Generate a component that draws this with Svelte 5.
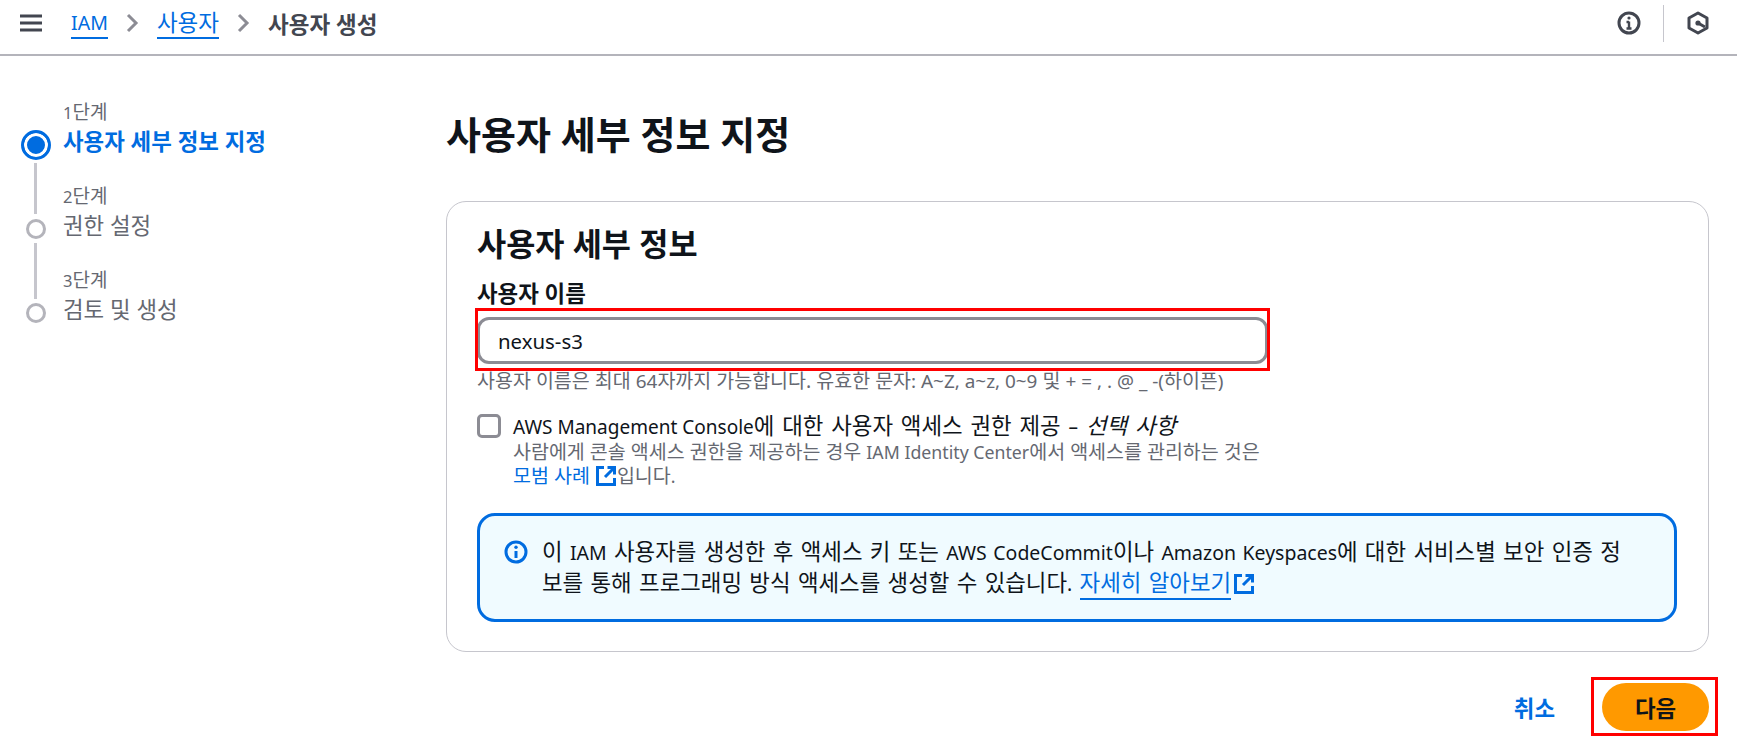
<script>
  let steps = [
    { no: '단계', n: 1, title: '사용자 세부 정보 지정', active: true },
    { no: '단계', n: 2, title: '권한 설정', active: false },
    { no: '단계', n: 3, title: '검토 및 생성', active: false }
  ];
</script>

{#snippet external()}
  <svg class="ext" width="22" height="22" viewBox="0 0 22 22" fill="none" aria-hidden="true">
    <path d="M9 2.5H2.5v17h17V13" stroke="currentColor" stroke-width="3"/>
    <path d="M12.5 2.5h7v7M19 3l-9 9" stroke="currentColor" stroke-width="3"/>
  </svg>
{/snippet}

<div class="page">
  <header>
    <svg class="burger" width="22" height="18" viewBox="0 0 22 18" aria-hidden="true">
      <path d="M0 2h22M0 9h22M0 16h22" stroke="#424650" stroke-width="3"/>
    </svg>
    <nav class="crumbs">
      <a href="#iam"><span class="en">IAM</span></a>
      <svg width="13" height="20" viewBox="0 0 13 20" fill="none" aria-hidden="true"><path d="M2 2l8 8-8 8" stroke="#8c8c94" stroke-width="3"/></svg>
      <a href="#users">사용자</a>
      <svg width="13" height="20" viewBox="0 0 13 20" fill="none" aria-hidden="true"><path d="M2 2l8 8-8 8" stroke="#8c8c94" stroke-width="3"/></svg>
      <span>사용자 생성</span>
    </nav>
    <div class="tools">
      <svg width="24" height="24" viewBox="0 0 24 24" fill="none" aria-hidden="true">
        <circle cx="12" cy="12" r="10" stroke="#424650" stroke-width="3"/>
        <path d="M12 10.5V18M9.5 17.5h5M9.5 11h2.5" stroke="#424650" stroke-width="2.4"/>
        <circle cx="12" cy="7" r="1.6" fill="#424650"/>
      </svg>
      <i class="sep"></i>
      <svg width="24" height="24" viewBox="0 0 24 24" fill="none" aria-hidden="true">
        <path d="M12 2l9 5v10l-9 5-9-5V7z" stroke="#424650" stroke-width="3" stroke-linejoin="round"/>
        <circle cx="12" cy="12" r="2.6" fill="#424650"/>
        <path d="M12 12l7 4" stroke="#424650" stroke-width="3"/>
      </svg>
    </div>
  </header>

  <div class="body">
    <ol class="steps">
      {#each steps as s, i}
        <li class:active={s.active}>
          <small><span class="en">{s.n}</span>{s.no}</small>
          <div class="row">
            <b class="dot"></b>
            <span>{s.title}</span>
          </div>
          {#if i < steps.length - 1}<i class="line"></i>{/if}
        </li>
      {/each}
    </ol>

    <main>
      <h1>사용자 세부 정보 지정</h1>
      <section class="card">
        <h2>사용자 세부 정보</h2>
        <label for="user">사용자 이름</label>
        <div class="input-wrap">
          <input id="user" value="nexus-s3" />
        </div>
        <p class="hint">사용자 이름은 최대 <span class="en">64</span>자까지 가능합니다. 유효한 문자<span class="en">: A~Z, a~z, 0~9</span> 및 <span class="en">+ = , . @ _ -(</span>하이픈<span class="en">)</span></p>

        <div class="check">
          <span class="box"></span>
          <div>
            <p class="check-title"><span class="en">AWS Management Console</span>에 대한 사용자 액세스 권한 제공 <span class="en">–</span> <em>선택 사항</em></p>
            <p class="check-desc">사람에게 콘솔 액세스 권한을 제공하는 경우 <span class="en">IAM Identity Center</span>에서 액세스를 관리하는 것은<br /><a href="#best">모범 사례 {@render external()}</a>입니다<span class="en">.</span></p>
          </div>
        </div>

        <div class="info">
          <svg class="info-icon" width="24" height="24" viewBox="0 0 24 24" fill="none" aria-hidden="true">
            <circle cx="12" cy="12" r="10" stroke="#006ce0" stroke-width="3"/>
            <path d="M12 11v7" stroke="#006ce0" stroke-width="3"/>
            <circle cx="12" cy="7.2" r="1.7" fill="#006ce0"/>
          </svg>
          <p>이 <span class="en">IAM</span> 사용자를 생성한 후 액세스 키 또는 <span class="en">AWS CodeCommit</span>이나 <span class="en">Amazon Keyspaces</span>에 대한 서비스별 보안 인증 정보를 통해 프로그래밍 방식 액세스를 생성할 수 있습니다<span class="en">.</span> <a href="#more">자세히 알아보기 </a><span class="ext-wrap">{@render external()}</span></p>
        </div>
      </section>

      <div class="actions">
        <a class="cancel" href="#cancel">취소</a>
        <button>다음</button>
      </div>
    </main>
  </div>
</div>

<style>
  :global(body) {
    margin: 0;
    background: #fff;
  }

  .page {
    width: 1737px;
    height: 747px;
    overflow: hidden;
    font-family: "Noto Sans", "Noto Sans CJK KR", sans-serif;
    color: #0f141a;
  }

  /* latin text sits smaller than the hangul around it */
  .en {
    font-size: 0.87em;
  }

  header {
    height: 56px;
    box-sizing: border-box;
    border-bottom: 2px solid #b4b4bb;
    display: flex;
    align-items: center;
    padding: 0 27px 8px 20px;
  }

  .crumbs {
    display: flex;
    align-items: center;
    gap: 18px;
    margin-left: 29px;
    font-size: 22.5px;
    color: #424650;
    font-weight: 700;
  }

  .crumbs a {
    color: #006ce0;
    font-weight: 400;
    text-decoration: none;
    border-bottom: 2px solid #006ce0;
    line-height: 29px;
  }

  .tools {
    margin-left: auto;
    display: flex;
    align-items: center;
    gap: 22px;
  }

  .sep {
    width: 1px;
    height: 37px;
    background: #c6c6cd;
  }

  .body {
    display: flex;
  }

  .steps {
    list-style: none;
    margin: 0;
    padding: 44px 0 0 20px;
    width: 446px;
    flex: none;
    box-sizing: border-box;
  }

  .steps li {
    position: relative;
    height: 84px;
    padding-left: 43px;
    color: #656871;
    font-size: 22.4px;
  }

  .steps small {
    display: block;
    font-size: 19px;
    line-height: 24px;
    color: #656871;
  }

  .row {
    display: flex;
    line-height: 30px;
    margin-top: 2px;
  }

  .active .row {
    color: #006ce0;
    font-weight: 700;
  }

  .dot {
    position: absolute;
    left: 6px;
    top: 35px;
    width: 20px;
    height: 20px;
    box-sizing: border-box;
    border: 3px solid #b4b4bb;
    border-radius: 50%;
    background: #fff;
  }

  .active .dot {
    left: 1px;
    top: 30px;
    width: 30px;
    height: 30px;
    border-color: #006ce0;
    background: #006ce0;
    box-shadow: inset 0 0 0 3px #fff;
  }

  .line {
    position: absolute;
    left: 14px;
    top: 63px;
    width: 3px;
    height: 51px;
    background: #c6c6cd;
  }

  li:not(.active) .line {
    top: 59px;
    height: 56px;
  }

  main {
    width: 1263px;
    flex: none;
  }

  h1 {
    margin: 0;
    font-size: 38px;
    line-height: 44px;
    font-weight: 700;
    padding-top: 56px;
  }

  .card {
    margin-top: 45px;
    height: 451px;
    box-sizing: border-box;
    border: 1px solid #c6c6cd;
    border-radius: 20px;
    padding: 24px 29px 0 30px;
  }

  h2 {
    margin: 0;
    font-size: 31.7px;
    line-height: 36px;
    font-weight: 700;
  }

  label {
    display: block;
    margin-top: 17px;
    font-size: 22.4px;
    line-height: 30px;
    font-weight: 700;
  }

  .input-wrap {
    position: relative;
    width: 791px;
    margin-top: 8px;
  }

  /* red annotation around the input */
  .input-wrap::after {
    content: '';
    position: absolute;
    inset: -9px -2px -7px -2px;
    border: 3px solid #f00;
    pointer-events: none;
  }

  input {
    display: block;
    width: 100%;
    height: 47px;
    box-sizing: border-box;
    border: 3px solid #8c8c94;
    border-radius: 12px;
    padding: 0 18px;
    font: inherit;
    font-size: 20.4px;
    color: #0f141a;
    outline: none;
  }

  .hint {
    margin: 5px 0 0;
    font-size: 19.5px;
    line-height: 24px;
    color: #656871;
  }

  .hint .en {
    font-size: 0.97em;
  }

  .check-desc .en {
    font-size: 0.91em;
  }

  .check {
    display: flex;
    gap: 12px;
    margin-top: 20px;
  }

  .box {
    flex: none;
    width: 24px;
    height: 24px;
    box-sizing: border-box;
    border: 3px solid #8c8c94;
    border-radius: 5px;
    margin-top: 1px;
  }

  .check p {
    margin: 0;
  }

  .check-title {
    font-size: 22.4px;
    line-height: 25px;
    word-spacing: 2px;
  }

  .check-title .en {
    font-size: 0.85em;
    word-spacing: 0;
  }

  .check-desc {
    font-size: 19.5px;
    line-height: 24px;
    color: #656871;
  }

  .check-desc a,
  .info a,
  .ext-wrap {
    color: #006ce0;
    text-decoration: none;
  }

  .ext {
    vertical-align: -4px;
  }

  .info {
    margin-top: 25px;
    width: 1200px;
    height: 109px;
    box-sizing: border-box;
    border: 3px solid #006ce0;
    border-radius: 18px;
    background: #f0fbff;
    display: flex;
    gap: 14px;
    padding: 21px 36px 0 24px;
  }

  .info-icon {
    flex: none;
    margin-top: 3px;
  }

  .info p {
    margin: 0;
    font-size: 22.4px;
    line-height: 30px;
    word-spacing: 1.5px;
  }

  .info a {
    border-bottom: 2px solid #006ce0;
  }

  .ext-wrap {
    margin-left: 2px;
  }

  .actions {
    display: flex;
    align-items: center;
    justify-content: flex-end;
    gap: 47px;
    margin-top: 31px;
  }

  .cancel {
    color: #006ce0;
    font-size: 22.4px;
    font-weight: 700;
    text-decoration: none;
  }

  button {
    position: relative;
    width: 107px;
    height: 48px;
    border: 0;
    border-radius: 24px;
    background: #f90;
    color: #0f141a;
    font: inherit;
    font-size: 22.4px;
    font-weight: 700;
  }

  button::after {
    content: '';
    position: absolute;
    inset: -6px -9px -5px -11px;
    border: 3px solid #f00;
  }
</style>
